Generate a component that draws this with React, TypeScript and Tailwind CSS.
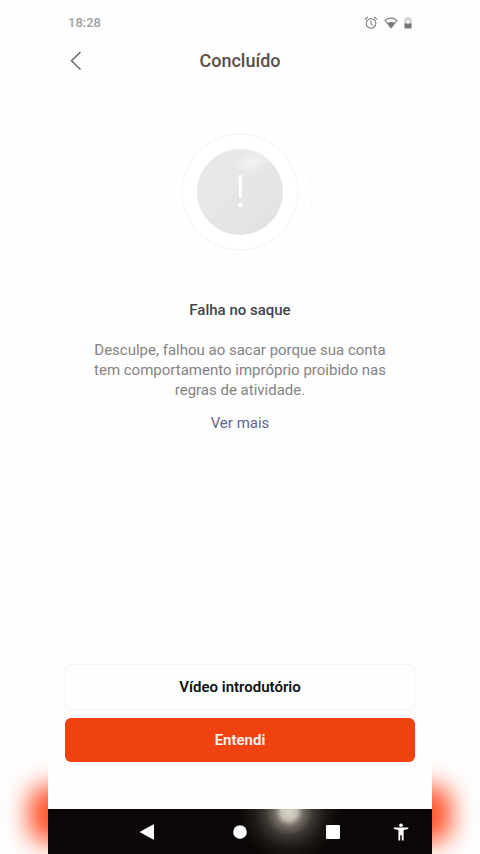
import React from "react";

function StatusBar() {
  return (
    <div className="flex h-[45px] items-center justify-between px-5 text-[13px] font-medium text-[#a09e9e]">
      <span>18:28</span>
      <div className="flex items-center gap-1.5">
        <svg width="14" height="14" viewBox="0 0 14 14" fill="none" stroke="#8a8a8a" strokeWidth="1.2" strokeLinecap="round" aria-label="Alarme">
          <circle cx="7" cy="7.4" r="4.8" />
          <path d="M7 4.8v2.8l1.6 1.6M1.2 3.2l2.3-1.9M12.8 3.2l-2.3-1.9" />
        </svg>
        <svg width="14" height="12" viewBox="0 0 14 12" aria-label="Wi-Fi">
          <path d="M1 3.4C4.4.4 9.6.4 13 3.4L7 10.8z" fill="none" stroke="#858585" strokeWidth="1.1" strokeLinejoin="round" />
          <path d="M3.3 6.1c2.2-1.5 5.2-1.5 7.4 0L7 11z" fill="#777" />
        </svg>
        <svg width="8" height="12" viewBox="0 0 8 12" aria-label="Bateria">
          <path d="M2.5 0h3v1.2H7a.6.6 0 0 1 .6.6V7H.4V1.800a.6.6 0 0 1 .6-.6h1.500z" fill="#cfcfcf" />
          <path d="M3 3h2v4H3z" fill="#fff" />
          <path d="M.4 6.500h7.200v4.300a.6.6 0 0 1-.6.6H1a.6.6 0 0 1-.6-.6z" fill="#777" />
        </svg>
      </div>
    </div>
  );
}

function Header() {
  return (
    <header className="grid h-8 grid-cols-[1fr_auto_1fr] items-center px-5">
      <button type="button" aria-label="Voltar" className="flex h-8 w-8 items-center">
        <svg width="16" height="20" viewBox="0 0 16 20" fill="none" stroke="#6b6765" strokeWidth="1.5">
          <path d="M12.500 1L3.500 9.800l9 8.700" />
        </svg>
      </button>
      <h1 className="text-lg font-medium text-[#5a4d48]">Concluído</h1>
    </header>
  );
}

function FailureMark() {
  return (
    <svg className="mx-auto block" width="148" height="148" viewBox="0 0 148 148" role="img" aria-label="Falha">
      <defs>
        <linearGradient id="disc" x1="0" y1="0" x2="1" y2="1">
          <stop offset="0" stopColor="#ebe9ea" />
          <stop offset="1" stopColor="#e3e1e2" />
        </linearGradient>
        <radialGradient id="shine">
          <stop offset="0" stopColor="#f6f4f5" />
          <stop offset="1" stopColor="#f0eeef" stopOpacity="0" />
        </radialGradient>
      </defs>
      <path d="M126 23A73 73 0 0 1 54 144" fill="none" stroke="#fbf8f9" />
      <circle cx="74" cy="74" r="58" fill="#fff" stroke="#f5f2f3" />
      <circle cx="74" cy="74" r="43" fill="url(#disc)" />
      <ellipse cx="86" cy="44" rx="21" ry="12" transform="rotate(-18 86 44)" fill="url(#shine)" />
      <path d="M72.500 57h3.600l-.6 23h-2.400z" fill="#fff" />
      <circle cx="74.500" cy="87" r="2.200" fill="#fff" />
    </svg>
  );
}

function NavBar() {
  return (
    <nav className="grid h-[45px] grid-cols-[52px_1fr_1fr_1fr_44px] items-center justify-items-center bg-[#0b0706] bg-[radial-gradient(circle_at_241px_3px,#dcd5c9_0px,#c4bdb2_8px,#756e65_14px,#3b3631_24px,#1c1815_36px,transparent_50px)] pr-[9px]">
      <span />
      <button type="button" aria-label="Voltar">
        <svg width="16" height="16" viewBox="0 0 16 16" fill="#fff">
          <path d="M14.500.8v14.400L1.500 8z" stroke="#fff" strokeLinejoin="round" />
        </svg>
      </button>
      <button type="button" aria-label="Início">
        <svg width="14" height="14" viewBox="0 0 14 14" fill="#fff">
          <circle cx="7" cy="7" r="6.800" />
        </svg>
      </button>
      <button type="button" aria-label="Recentes">
        <svg width="16" height="16" viewBox="0 0 16 16" fill="#fff">
          <rect x="1" y="1" width="14" height="14" rx="1" />
        </svg>
      </button>
      <button type="button" aria-label="Acessibilidade">
        <svg width="16" height="18" viewBox="0 0 16 18" fill="#fff">
          <circle cx="8" cy="2.200" r="1.800" />
          <path d="M.8 4.400h14.400v1.700L10.600 7v10.500H8.800v-5.300H7.200v5.300H5.400V7L.8 6.100z" />
        </svg>
      </button>
    </nav>
  );
}

export default function App() {
  return (
    <div className="relative flex min-h-screen justify-center overflow-hidden bg-[#fefefe] font-[Roboto,sans-serif]">
      <div className="absolute inset-x-[6%] bottom-3 h-14 rounded-2xl bg-[#ff5026] blur-[12px]" />
      <main className="relative flex w-4/5 flex-col bg-[#fefefe]">
        <StatusBar />
        <Header />
        <section className="px-10 pt-[41px] text-center text-[15px] leading-5">
          <FailureMark />
          <h2 className="mt-[34px] font-medium text-[#484444]">Falha no saque</h2>
          <p className="mt-5 text-[#858283]">
            Desculpe, falhou ao sacar porque sua conta tem comportamento impróprio proibido nas regras de atividade.
          </p>
          <a href="#mais" className="mt-[13px] inline-block text-[#62668e]">Ver mais</a>
        </section>
        <div className="mt-auto flex flex-col gap-2 px-[17px] pb-[47px] text-[15px] font-semibold">
          <button type="button" className="h-[46px] rounded-md border border-[#f5f3f5] bg-[#fefefe] text-[#111]">
            Vídeo introdutório
          </button>
          <button type="button" className="h-11 rounded-md bg-[#f04311] text-[#fff5f0]">
            Entendi
          </button>
        </div>
        <NavBar />
      </main>
    </div>
  );
}
